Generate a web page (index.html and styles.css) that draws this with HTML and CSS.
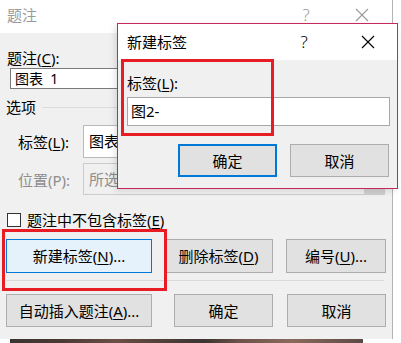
FILE: index.html
```html
<!DOCTYPE html>
<html lang="zh-CN">
<head>
  <meta charset="UTF-8" />
  <meta name="viewport" content="width=device-width, initial-scale=1.0" />
  <title>题注 - 新建标签</title>
  <link rel="stylesheet" href="styles.css">
</head>
<body>
  <div class="screen">
    <div class="caption-win">
      <div class="titlebar inactive">
        <span class="title">题注</span>
        <span class="help">?</span>
        <svg class="close" width="14" height="14" viewBox="0 0 14 14">
          <path d="M1 1 L13 13 M13 1 L1 13" stroke="currentColor" stroke-width="1.1" fill="none" />
        </svg>
      </div>
      <div class="win-body">
        <div class="label">题注(<u>C</u>):</div>
        <div class="textbox caption-text">图表&nbsp; 1</div>
        <div class="group-title"><span>选项</span><span class="rule"></span></div>
        <div class="field-row">
          <span class="field-label">标签(<u>L</u>):</span>
          <div class="combo">图表</div>
        </div>
        <div class="field-row disabled">
          <span class="field-label">位置(P):</span>
          <div class="combo">所选项目下方<span class="drop"></span></div>
        </div>
        <div class="check">
          <span class="box"></span>
          <span>题注中不包含标签(<u>E</u>)</span>
        </div>
        <div class="btn-row top-row">
          <button class="btn btn-wide focused">新建标签(<u>N</u>)...</button>
          <button class="btn btn-mid">删除标签(<u>D</u>)</button>
          <button class="btn btn-num">编号(<u>U</u>)...</button>
        </div>
        <div class="sep"></div>
        <div class="btn-row bottom-row">
          <button class="btn btn-wide">自动插入题注(<u>A</u>)...</button>
          <button class="btn btn-ok">确定</button>
          <button class="btn btn-cancel">取消</button>
        </div>
      </div>
    </div>
    <div class="photo"></div>

    <div class="dialog">
      <div class="titlebar">
        <span class="title">新建标签</span>
        <span class="help">?</span>
        <svg class="close" width="14" height="14" viewBox="0 0 14 14">
          <path d="M1 1 L13 13 M13 1 L1 13" stroke="currentColor" stroke-width="1.1" fill="none" />
        </svg>
      </div>
      <div class="dialog-body">
        <div class="label">标签(<u>L</u>):</div>
        <div class="textbox label-input">图2-</div>
        <div class="dialog-buttons">
          <button class="btn default">确定</button>
          <button class="btn">取消</button>
        </div>
      </div>
    </div>

    <div class="mark mark-label"></div>
    <div class="mark mark-button"></div>
  </div>
</body>
</html>
```

FILE: styles.css
```css
html, body {
  margin: 0;
  padding: 0;
}
body {
  font-family: "Noto Sans", "Noto Sans CJK SC", sans-serif;
  font-size: 15px;
  color: #000;
  background: #fff;
}
u {
  text-decoration: underline;
  text-underline-offset: 2px;
}
.screen {
  position: relative;
  width: 401px;
  height: 343px;
  overflow: hidden;
}

/* background window */
.caption-win {
  width: 393px;
  height: 339px;
  box-sizing: border-box;
  background: #f0f0f0;
  border-right: 1px solid #b4b4b4;
}
.titlebar {
  display: flex;
  align-items: center;
  background: #fff;
  color: #000;
}
.caption-win .titlebar {
  height: 33px;
  padding: 0 0 3px 7px;
  box-sizing: border-box;
  color: #9a9a9a;
}
.titlebar .title {
  flex: 1;
  line-height: 20px;
}
.titlebar .help {
  width: 14px;
  text-align: center;
  font-size: 17px;
  font-weight: 300;
  line-height: 20px;
}
.titlebar .close {
  display: block;
}
.caption-win .help {
  margin-right: 42px;
}
.caption-win .close {
  margin-right: 23px;
}
.win-body {
  padding: 15px 0 0 0;
}
.label {
  line-height: 20px;
  padding-left: 7px;
}
.textbox {
  background: #fff;
  border: 1px solid #7a7a7a;
  box-sizing: border-box;
}
.caption-text {
  margin-left: 10px;
  width: 375px;
  height: 21px;
  font-size: 14px;
  line-height: 19px;
  padding-left: 4px;
}
.group-title {
  display: flex;
  align-items: center;
  margin-top: 8px;
  padding-left: 6px;
  line-height: 20px;
}
.group-title .rule {
  flex: 1;
  height: 1px;
  background: #dcdcdc;
  margin: 0 8px 0 6px;
}
.field-row {
  display: flex;
  align-items: center;
  margin-top: 8px;
  padding-left: 18px;
}
.field-row.disabled {
  margin-top: 5px;
  color: #8d8d8d;
}
.field-label {
  width: 65px;
}
.combo {
  position: relative;
  width: 302px;
  height: 33px;
  box-sizing: border-box;
  background: #fff;
  border: 1px solid #b9b9b9;
  padding-left: 5px;
  line-height: 31px;
  overflow: hidden;
  white-space: nowrap;
}
.disabled .combo {
  height: 32px;
  background: #f0f0f0;
  border-color: #cccccc;
}
.combo .drop {
  position: absolute;
  right: 0;
  top: 0;
  bottom: 0;
  width: 20px;
  background: #cfcfcf;
}
.check {
  display: flex;
  align-items: center;
  margin-top: 15px;
  padding-left: 7px;
  line-height: 20px;
}
.check .box {
  width: 14px;
  height: 14px;
  box-sizing: border-box;
  border: 1px solid #333;
  background: #fff;
  margin-right: 6px;
}
.btn-row {
  display: flex;
  padding-left: 6px;
}
.top-row {
  margin-top: 9px;
}
.bottom-row {
  margin-top: 13px;
}
.btn {
  font: inherit;
  color: #000;
  background: #e1e1e1;
  border: 1px solid #adadad;
  box-sizing: border-box;
  padding: 0;
  height: 34px;
  line-height: 20px;
}
.btn-wide {
  width: 146px;
}
.btn-mid {
  width: 109px;
  margin-left: 12px;
}
.btn-num {
  width: 100px;
  margin-left: 13px;
}
.btn.focused {
  background: #e5f1fb;
  border-color: #0078d7;
}
.bottom-row .btn {
  height: 33px;
}
.btn-ok {
  width: 99px;
  margin-left: 22px;
}
.btn-cancel {
  width: 99px;
  margin-left: 14px;
}
.sep {
  margin: 7px 8px 0 6px;
  height: 1px;
  background: #dadada;
}
.photo {
  margin-left: 10px;
  width: 353px;
  height: 4px;
  background: linear-gradient(90deg, #3a3430 0%, #4a3a34 15%, #6b4f44 30%, #4c3e38 45%, #3b3532 55%, #6e5248 65%, #8a6a5c 80%, #5a4a44 100%);
}

/* new label dialog, on top */
.dialog {
  position: absolute;
  left: 117px;
  top: 23px;
  width: 281px;
  height: 166px;
  box-sizing: border-box;
  border: 1px solid #c4285c;
  background: #f0f0f0;
  box-shadow: -2px 2px 6px rgba(0, 0, 0, 0.12);
}
.dialog .titlebar {
  height: 36px;
  padding-left: 9px;
}
.dialog .help {
  margin-right: 50px;
}
.dialog .close {
  margin-right: 22px;
}
.dialog-body {
  padding: 13px 0 0 9px;
}
.dialog-body .label {
  padding-left: 0;
}
.label-input {
  margin-top: 4px;
  width: 263px;
  height: 29px;
  border-color: #a8a8a8;
  line-height: 27px;
  padding-left: 3px;
}
.dialog-buttons {
  display: flex;
  gap: 13px;
  margin: 18px 0 0 51px;
}
.dialog-buttons .btn {
  width: 99px;
  height: 33px;
}
.dialog-buttons .btn.default {
  border: 2px solid #0078d7;
}

/* red annotation boxes */
.mark {
  position: absolute;
  border: 3px solid #e81c24;
  box-sizing: border-box;
}
.mark-label {
  left: 121px;
  top: 59px;
  width: 153px;
  height: 77px;
}
.mark-button {
  left: 2px;
  top: 229px;
  width: 165px;
  height: 62px;
}
```
